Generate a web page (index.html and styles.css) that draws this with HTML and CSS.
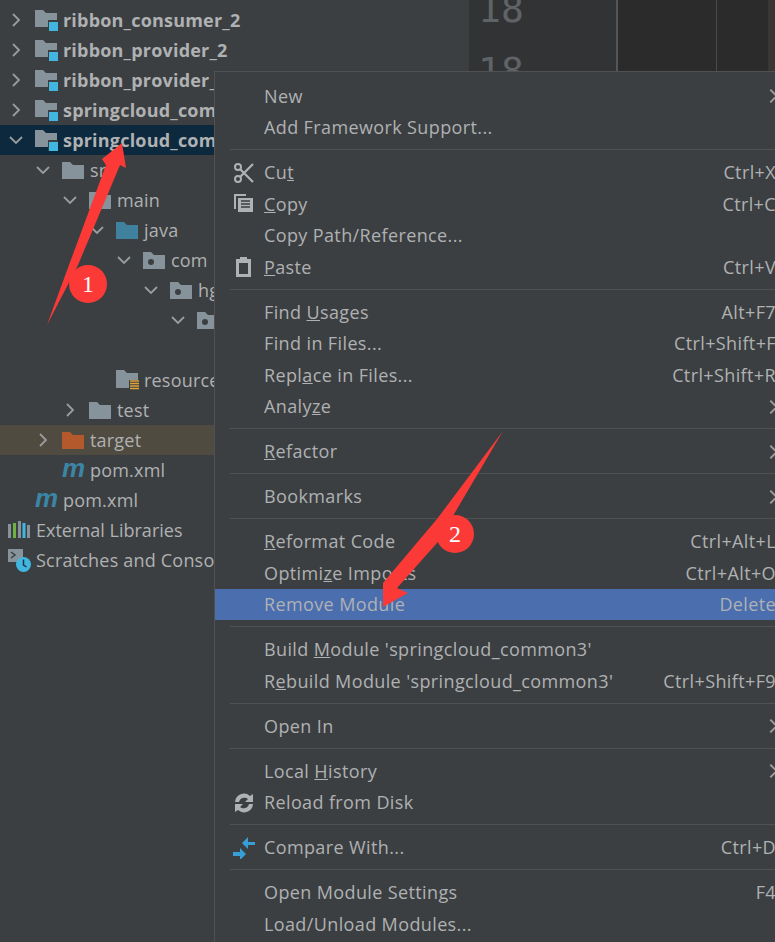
FILE: index.html
```html
<!DOCTYPE html>
<html lang="en">
  <head>
    <meta charset="UTF-8" />
    <meta name="viewport" content="width=device-width, initial-scale=1.0" />
    <link rel="stylesheet" href="styles.css">
    <title>Remove Module</title>
  </head>
  <body>
    <svg width="0" height="0" class="defs">
      <symbol id="folder" viewBox="0 0 22 18"><path d="M0 1h8l3 3h11v14H0z"/></symbol>
      <symbol id="pkg" viewBox="0 0 22 18"><path d="M0 1h8l3 3h11v14H0z"/><circle cx="8" cy="11" r="3" fill="#3c3f41"/></symbol>
      <symbol id="chev-right" viewBox="0 0 10 14"><path d="M2 1l6 6-6 6" fill="none" stroke="#9a9c9e" stroke-width="1.8"/></symbol>
      <symbol id="chev-down" viewBox="0 0 14 10"><path d="M1 2l6 6 6-6" fill="none" stroke="#9a9c9e" stroke-width="1.8"/></symbol>
      <symbol id="module" viewBox="0 0 23 22"><path d="M0 1h8l3 3h11v14H0z" fill="#87939a"/><path d="M13 11h10v11H13z" fill="#3c3f41"/><path d="M14 13h9v9h-9z" fill="#40b6e0"/></symbol>
    </svg>

    <div class="ide">
      <aside class="tree">
        <div class="tree__row tree__row_bold"><span class="tree__in i1"><svg class="chev-r"><use href="#chev-right"/></svg><svg class="mod"><use href="#module"/></svg>ribbon_consumer_2</span></div>
        <div class="tree__row tree__row_bold"><span class="tree__in i1"><svg class="chev-r"><use href="#chev-right"/></svg><svg class="mod"><use href="#module"/></svg>ribbon_provider_2</span></div>
        <div class="tree__row tree__row_bold"><span class="tree__in i1"><svg class="chev-r"><use href="#chev-right"/></svg><svg class="mod"><use href="#module"/></svg>ribbon_provider_3</span></div>
        <div class="tree__row tree__row_bold"><span class="tree__in i1"><svg class="chev-r"><use href="#chev-right"/></svg><svg class="mod"><use href="#module"/></svg>springcloud_common2</span></div>
        <div class="tree__row tree__row_bold tree__row_selected"><span class="tree__in i1"><svg class="chev-d"><use href="#chev-down"/></svg><svg class="mod"><use href="#module"/></svg>springcloud_common3</span></div>
        <div class="tree__row"><span class="tree__in i2"><svg class="chev-d"><use href="#chev-down"/></svg><svg class="ico ico_grey"><use href="#folder"/></svg>src</span></div>
        <div class="tree__row"><span class="tree__in i3"><svg class="chev-d"><use href="#chev-down"/></svg><svg class="ico ico_grey"><use href="#folder"/></svg>main</span></div>
        <div class="tree__row"><span class="tree__in i4"><svg class="chev-d"><use href="#chev-down"/></svg><svg class="ico ico_blue"><use href="#folder"/></svg>java</span></div>
        <div class="tree__row"><span class="tree__in i5"><svg class="chev-d"><use href="#chev-down"/></svg><svg class="ico ico_grey"><use href="#pkg"/></svg>com</span></div>
        <div class="tree__row"><span class="tree__in i6"><svg class="chev-d"><use href="#chev-down"/></svg><svg class="ico ico_grey"><use href="#pkg"/></svg>hg</span></div>
        <div class="tree__row"><span class="tree__in i7"><svg class="chev-d"><use href="#chev-down"/></svg><svg class="ico ico_grey"><use href="#pkg"/></svg>utils</span></div>
        <div class="tree__row"></div>
        <div class="tree__row"><span class="tree__in i4 tree__in_leaf"><svg class="res" viewBox="0 0 23 20"><path d="M0 0h8l3 3h11v7H13v8H0z" fill="#87939a"/><path d="M14 11h9M14 13.5h9M14 16h9M14 18.5h9" stroke="#e0a43a" stroke-width="1.4"/></svg>resources</span></div>
        <div class="tree__row"><span class="tree__in i3"><svg class="chev-r"><use href="#chev-right"/></svg><svg class="ico ico_grey"><use href="#folder"/></svg>test</span></div>
        <div class="tree__row tree__row_excluded"><span class="tree__in i2"><svg class="chev-r"><use href="#chev-right"/></svg><svg class="ico ico_orange"><use href="#folder"/></svg>target</span></div>
        <div class="tree__row"><span class="tree__in i2 tree__in_leaf"><span class="mvn">m</span>pom.xml</span></div>
        <div class="tree__row"><span class="tree__in i1 tree__in_leaf"><span class="mvn">m</span>pom.xml</span></div>
        <div class="tree__row"><span class="tree__in i0 tree__in_tight"><svg class="lib" viewBox="0 0 22 18"><path d="M0 3h3v14H0z" fill="#87939a"/><path d="M5 2h3v15H5z" fill="#6fb243"/><path d="M10 0h3v17h-3z" fill="#87939a"/><path d="M14.500 2h3v15h-3z" fill="#40b6e0"/><path d="M19 4h3v13h-3z" fill="#87939a"/></svg>External Libraries</span></div>
        <div class="tree__row"><span class="tree__in i0"><svg class="lib lib_tall" viewBox="0 0 23 23"><path d="M0 0h15v13H0z" fill="#87939a"/><path d="M3 3l4 3-4 3" fill="none" stroke="#3c3f41" stroke-width="1.5"/><circle cx="15.500" cy="15.500" r="7.500" fill="#40b6e0"/><path d="M15.500 10.500v5.500l3 2" fill="none" stroke="#26363f" stroke-width="1.500"/></svg>Scratches and Consoles</span></div>
      </aside>
      <div class="gutter">
        <span class="gutter__num">18</span>
        <span class="gutter__num">18</span>
      </div>
      <div class="editor"></div>
      <div class="editor editor_narrow"></div>
      <div class="minimap"></div>
    </div>

    <div class="menu">
      <div class="menu__item"><span>New</span><span class="menu__arrow"></span></div>
      <div class="menu__item"><span>Add Framework Support...</span></div>
      <div class="menu__sep"></div>
      <div class="menu__item"><svg class="menu__icon" viewBox="0 0 22 22"><circle cx="5" cy="5" r="3" fill="none" stroke="#afb1b3" stroke-width="2"/><circle cx="5" cy="17" r="3" fill="none" stroke="#afb1b3" stroke-width="2"/><path d="M7 7l13 13M7 15L20 2" stroke="#afb1b3" stroke-width="2.2"/></svg><span>Cu<u>t</u></span><span class="menu__key">Ctrl+X</span></div>
      <div class="menu__item"><svg class="menu__icon" viewBox="0 0 22 22"><path d="M1 1h12v2H3v13H1z" fill="#afb1b3"/><path d="M5 5h15v14H5z" fill="#afb1b3"/><path d="M8 8h9M8 11h9M8 14h9" stroke="#3c3f41" stroke-width="1.300"/></svg><span><u>C</u>opy</span><span class="menu__key">Ctrl+C</span></div>
      <div class="menu__item"><span>Copy Path/Reference...</span></div>
      <div class="menu__item"><svg class="menu__icon" viewBox="0 0 22 22"><path d="M3 3h4V1h7v2h4v18H3z" fill="#afb1b3"/><path d="M6 7h9v11H6z" fill="#3c3f41"/></svg><span><u>P</u>aste</span><span class="menu__key">Ctrl+V</span></div>
      <div class="menu__sep"></div>
      <div class="menu__item"><span>Find <u>U</u>sages</span><span class="menu__key">Alt+F7</span></div>
      <div class="menu__item"><span>Find in Files...</span><span class="menu__key">Ctrl+Shift+F</span></div>
      <div class="menu__item"><span>Repl<u>a</u>ce in Files...</span><span class="menu__key">Ctrl+Shift+R</span></div>
      <div class="menu__item"><span>Analy<u>z</u>e</span><span class="menu__arrow"></span></div>
      <div class="menu__sep"></div>
      <div class="menu__item"><span><u>R</u>efactor</span><span class="menu__arrow"></span></div>
      <div class="menu__sep"></div>
      <div class="menu__item"><span>Bookmarks</span><span class="menu__arrow"></span></div>
      <div class="menu__sep"></div>
      <div class="menu__item"><span><u>R</u>eformat Code</span><span class="menu__key">Ctrl+Alt+L</span></div>
      <div class="menu__item"><span>Optimi<u>z</u>e Imports</span><span class="menu__key">Ctrl+Alt+O</span></div>
      <div class="menu__item menu__item_active"><span>Remove Module</span><span class="menu__key">Delete</span></div>
      <div class="menu__sep"></div>
      <div class="menu__item"><span>Build <u>M</u>odule 'springcloud_common3'</span></div>
      <div class="menu__item"><span>R<u>e</u>build Module 'springcloud_common3'</span><span class="menu__key">Ctrl+Shift+F9</span></div>
      <div class="menu__sep"></div>
      <div class="menu__item"><span>Open In</span><span class="menu__arrow"></span></div>
      <div class="menu__sep"></div>
      <div class="menu__item"><span>Local <u>H</u>istory</span><span class="menu__arrow"></span></div>
      <div class="menu__item"><svg class="menu__icon" viewBox="0 0 22 22"><path d="M2 10a9 9 0 0 1 15-6l3-2v8h-8l3-3A5.500 5.500 0 0 0 6 10zM20 12a9 9 0 0 1-15 6l-3 2v-8h8l-3 3a5.500 5.500 0 0 0 9-3z" fill="#afb1b3"/></svg><span>Reload from Disk</span></div>
      <div class="menu__sep"></div>
      <div class="menu__item"><svg class="menu__icon" viewBox="0 0 22 22"><path d="M22 5h-7V0l-6 6 6 6V8h7zM0 15h7v-4l6 6-6 6v-4H0z" fill="#389fd6"/></svg><span>Compare With...</span><span class="menu__key">Ctrl+D</span></div>
      <div class="menu__sep"></div>
      <div class="menu__item"><span>Open Module Settings</span><span class="menu__key">F4</span></div>
      <div class="menu__item"><span>Load/Unload Modules...</span></div>
    </div>

    <svg class="arrows" viewBox="0 0 775 942">
      <path d="M122 143L126 168 120 165 78 265 47 325 69 265 106 165 102 159z" fill="#fb3a37"/>
      <path d="M503 431L437 543 397 588 408 593 383 607 383 583 437 519z" fill="#fb3a37"/>
    </svg>
    <span class="badge badge_one">1</span>
    <span class="badge badge_two">2</span>
  </body>
</html>
```

FILE: styles.css
```css
*,
*::after,
*::before {
  box-sizing: border-box;
  margin: 0;
  padding: 0;
}

html,
body {
  height: 100%;
  overflow: hidden;
}

body {
  background: #3c3f41;
  font-family: "Open Sans", "Noto Sans", sans-serif;
  font-size: 18px;
  color: #afb1b3;
  position: relative;
}

.defs {
  display: block;
}

.ide {
  display: flex;
  height: 100%;
}

.tree {
  width: 469px;
  padding-top: 5px;
  background: #3c3f41;
  flex-shrink: 0;
  letter-spacing: 0.2px;
}

.tree__row {
  height: 30px;
  display: flex;
  align-items: center;
  white-space: nowrap;
}

.tree__row_bold {
  font-weight: 700;
}

.tree__row_selected {
  background: #0d293e;
}

.tree__row_excluded {
  background: #4f4b41;
}

.tree__in {
  display: flex;
  align-items: center;
}

.tree__in_tight {
  letter-spacing: 0;
}

.i0 { padding-left: 8px; }
.i1 { padding-left: 9px; }
.i2 { padding-left: 36px; }
.i3 { padding-left: 63px; }
.i4 { padding-left: 90px; }
.i5 { padding-left: 117px; }
.i6 { padding-left: 144px; }
.i7 { padding-left: 171px; }

.tree__in_leaf {
  margin-left: 26px;
}

.chev-r {
  width: 10px;
  height: 14px;
  margin: 0 14px 0 2px;
}

.chev-d {
  width: 14px;
  height: 10px;
  margin: 0 12px 0 0;
}

.mod {
  width: 23px;
  height: 22px;
  margin-right: 5px;
}

.ico {
  width: 22px;
  height: 18px;
  margin-right: 6px;
}

.ico_grey { fill: #87939a; }
.ico_blue { fill: #40819e; }
.ico_orange { fill: #b3592b; }

.res {
  width: 23px;
  height: 20px;
  margin-right: 5px;
}

.mvn {
  width: 22px;
  margin-right: 6px;
  font: italic 700 26px/20px "Liberation Sans", sans-serif;
  color: #3b86a5;
  height: 24px;
}

.lib {
  width: 22px;
  height: 18px;
  margin-right: 6px;
}

.lib_tall {
  height: 23px;
  width: 23px;
  margin-right: 5px;
}

.gutter {
  width: 149px;
  flex-shrink: 0;
  background: #313335;
  border-right: 2px solid #555;
  color: #606366;
  font-family: "DejaVu Sans Mono", monospace;
  font-size: 38px;
  display: flex;
  flex-direction: column;
  padding-left: 9px;
  line-height: 52px;
}

.gutter__num {
  height: 62px;
  flex-shrink: 0;
  position: relative;
  top: -17px;
}

.editor {
  width: 99px;
  flex-shrink: 0;
  background: #2b2b2b;
  border-right: 1px solid #4a4a4a;
}

.editor_narrow {
  width: 51px;
  border-right: 0;
}

.minimap {
  flex: 1;
  background: linear-gradient(150deg, #3a3636 40%, #4a3850 50%, #3a3636 60%);
}

.menu {
  position: absolute;
  left: 214px;
  top: 71px;
  width: 600px;
  height: 900px;
  padding-top: 8px;
  background: #3c3f41;
  border: 1px solid #515151;
  letter-spacing: 0.38px;
}

.menu__item {
  height: 31.5px;
  display: flex;
  align-items: center;
  padding-left: 49px;
  position: relative;
  white-space: nowrap;
}

.menu__item_active {
  background: #4b6eaf;
}

.menu__sep {
  height: 13.5px;
  margin-left: 15px;
  display: flex;
  align-items: center;
}

.menu__sep::after {
  content: "";
  display: block;
  width: 100%;
  height: 1px;
  background: #515151;
}

.menu__icon {
  position: absolute;
  left: 18px;
  top: 5px;
  width: 22px;
  height: 22px;
}

.menu__key {
  position: absolute;
  right: 37px;
  top: 50%;
  transform: translateY(-50%);
}

.menu__arrow {
  position: absolute;
  left: 551px;
  top: 11px;
  width: 10px;
  height: 10px;
  border-top: 2px solid #9a9c9e;
  border-right: 2px solid #9a9c9e;
  transform: rotate(45deg);
}

.arrows {
  position: absolute;
  left: 0;
  top: 0;
  width: 775px;
  height: 942px;
  pointer-events: none;
}

.badge {
  position: absolute;
  width: 38px;
  height: 38px;
  border-radius: 50%;
  background: #fb3a37;
  color: #fff;
  font: 24px/38px "Liberation Serif", serif;
  text-align: center;
}

.badge_one {
  left: 69px;
  top: 265px;
}

.badge_two {
  left: 436px;
  top: 515px;
}
```
